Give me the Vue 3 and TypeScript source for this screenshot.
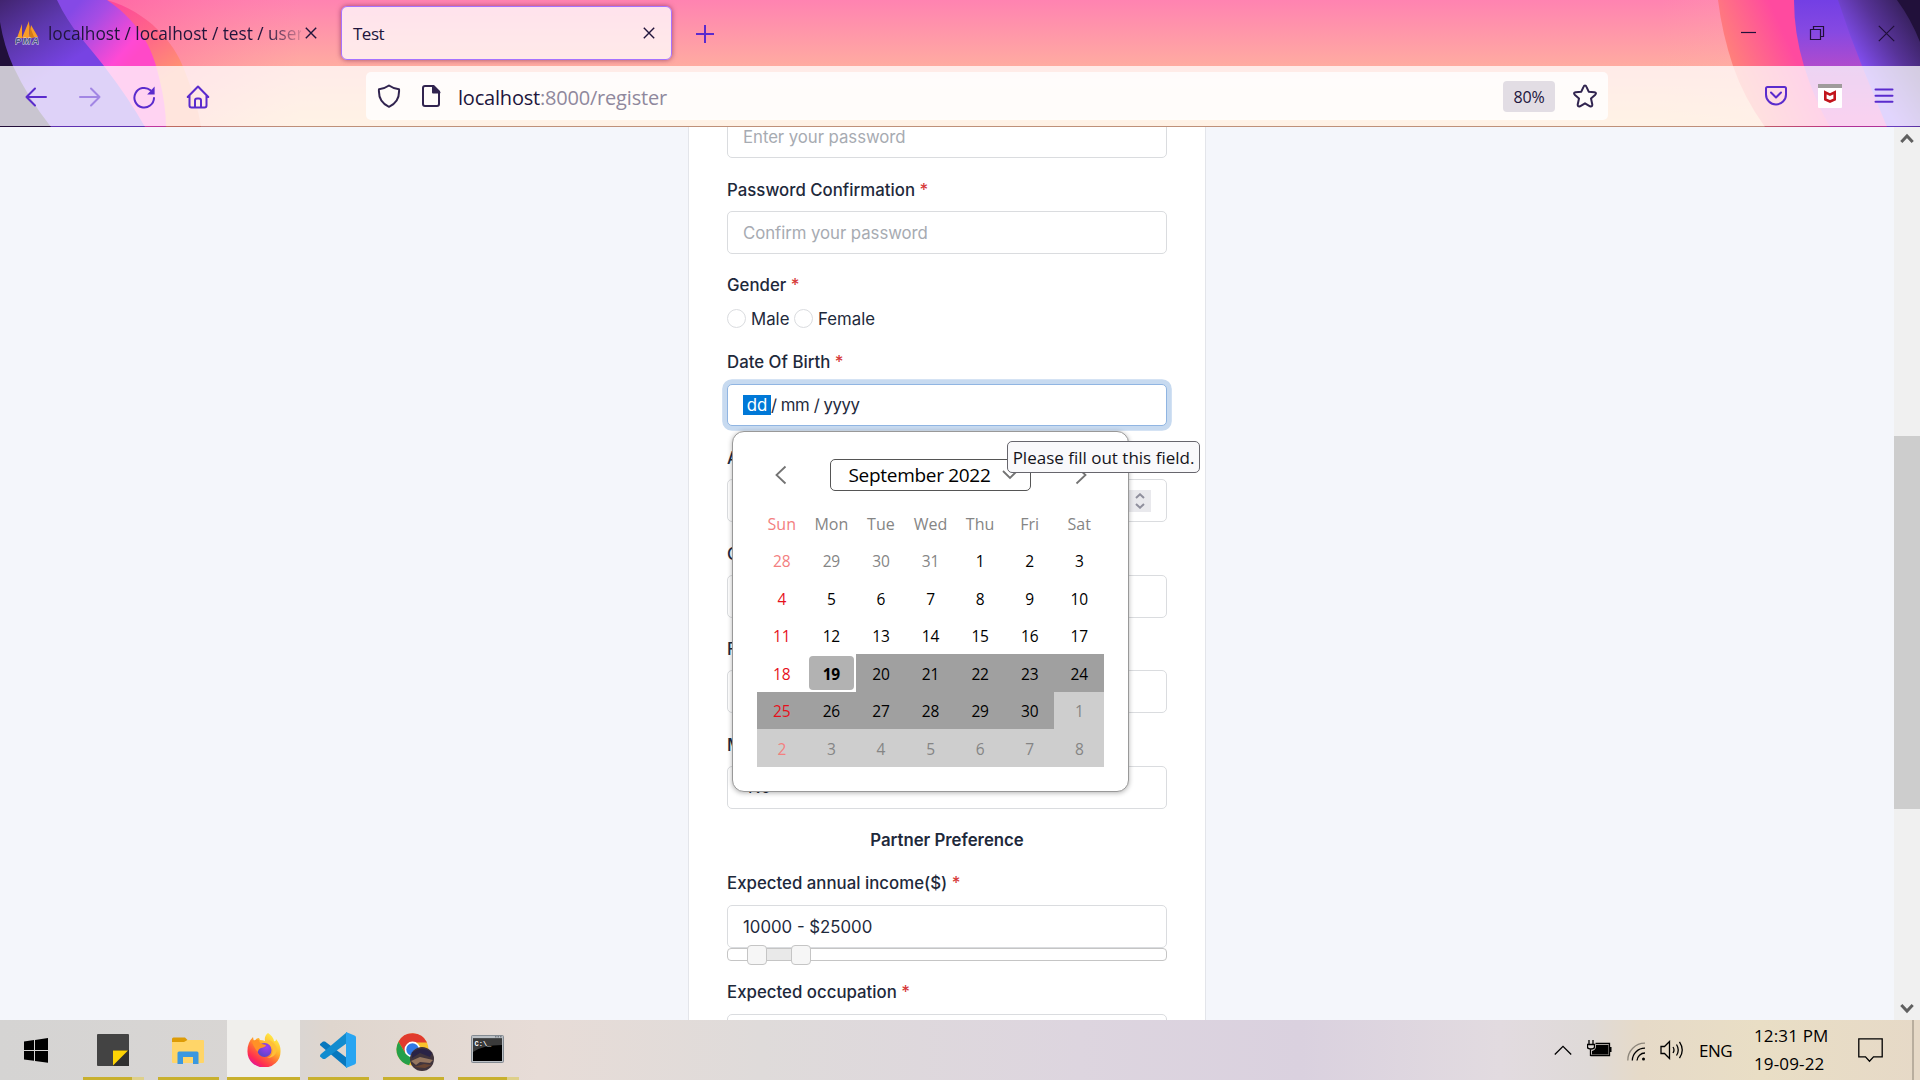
<script setup lang="ts">
interface Day { n: number; other: boolean; sunday: boolean; today: boolean; off: boolean }

const weekdays: string[] = ['Sun', 'Mon', 'Tue', 'Wed', 'Thu', 'Fri', 'Sat']

const days: Day[] = Array.from({ length: 42 }, (_, i) => {
  const offset = i - 3
  const other = offset < 1 || offset > 30
  const n = offset < 1 ? 31 + offset : offset > 30 ? offset - 30 : offset
  return { n, other, sunday: i % 7 === 0, today: offset === 19, off: offset > 19 }
})
</script>

<template>
  <div class="screen">
    <header class="chrome">
      <svg class="theme" viewBox="0 0 1920 127" width="1920" height="127" aria-hidden="true">
        <defs>
          <linearGradient id="base" x1="0" y1="0" x2="0" y2="1"><stop offset="0" stop-color="#ff83b1" /><stop offset=".52" stop-color="#ffaba1" /><stop offset="1" stop-color="#ffcb94" /></linearGradient>
          <linearGradient id="glowL" x1="0" y1="0" x2="1" y2="0"><stop offset="0" stop-color="#ff4f98" stop-opacity=".9" /><stop offset="1" stop-color="#ff6fa5" stop-opacity="0" /></linearGradient>
          <linearGradient id="glowR" x1="0" y1="0" x2="1" y2="0"><stop offset="0" stop-color="#ffb0a8" stop-opacity="0" /><stop offset="1" stop-color="#ffb2b4" stop-opacity=".8" /></linearGradient>
          <linearGradient id="coral" gradientUnits="userSpaceOnUse" x1="125" y1="0" x2="175" y2="75"><stop offset="0" stop-color="#fd4a98" /><stop offset=".55" stop-color="#ff6c86" /><stop offset="1" stop-color="#ff9471" /></linearGradient>
          <linearGradient id="magenta" gradientUnits="userSpaceOnUse" x1="72" y1="10" x2="130" y2="62"><stop offset="0" stop-color="#8549e6" /><stop offset=".3" stop-color="#a64ce4" /><stop offset=".85" stop-color="#ff49d4" /><stop offset="1" stop-color="#ff49c8" /></linearGradient>
          <linearGradient id="violet" gradientUnits="userSpaceOnUse" x1="0" y1="0" x2="50" y2="75"><stop offset="0" stop-color="#41246f" /><stop offset=".5" stop-color="#5d38ae" /><stop offset="1" stop-color="#7743e3" /></linearGradient>
          <linearGradient id="hot" gradientUnits="userSpaceOnUse" x1="1724" y1="50" x2="1790" y2="20"><stop offset="0" stop-color="#ff8279" /><stop offset=".85" stop-color="#ff4a9f" /></linearGradient>
          <linearGradient id="purple" x1="0" y1="0" x2="0" y2="1"><stop offset="0" stop-color="#733fe4" /><stop offset=".25" stop-color="#8649e2" /><stop offset=".55" stop-color="#b44bcb" /><stop offset="1" stop-color="#ea43c0" /></linearGradient>
          <linearGradient id="deep" gradientUnits="userSpaceOnUse" x1="1850" y1="52" x2="1908" y2="14"><stop offset="0" stop-color="#844ff4" /><stop offset=".55" stop-color="#573398" /><stop offset="1" stop-color="#38215f" /></linearGradient>
        </defs>
        <rect width="1920" height="127" fill="url(#base)" />
        <path d="M107 0H300V127H150Z" fill="url(#glowL)" opacity=".55" />
        <path d="M1660 0H1800V127H1660Z" fill="url(#glowR)" opacity=".45" />
        <path d="M0 0H107C148 12 174 42 184 69Q198 105 201 127H0Z" fill="url(#coral)" />
        <path d="M0 0H107C144 25 154 55 159 77Q166 105 166 127H0Z" fill="url(#magenta)" />
        <path d="M0 0H57C70 28 87 44 104 66Q130 100 145 127H0Z" fill="url(#violet)" />
        <path d="M0 22Q4 46 13 66Q28 98 51 127H0Z" fill="#21103a" />
        <path d="M1718 0Q1722 33 1733 66Q1744 98 1765 127H1920V0Z" fill="url(#hot)" />
        <path d="M1794 0Q1794 33 1804 66Q1814 99 1830 127H1920V0Z" fill="url(#purple)" />
        <path d="M1838 0Q1849 34 1862 66L1887 127H1920V0Z" fill="url(#deep)" />
        <path d="M1897 0Q1911 19 1920 42V0Z" fill="#21103a" />
      </svg>

      <div class="tabs">
        <div class="tab idle">
          <svg width="24" height="24" viewBox="0 0 24 24">
            <path d="M2 17 7 3 7 17ZM7 17 14 0 14.5 17ZM14.5 17 16 4 23 16Z" fill="#f89c28" />
            <path d="M14 3 15 17 19 16Z" fill="#d47a17" />
            <text x="0" y="23.4" font-family="Liberation Sans" font-size="9.4" font-weight="700" font-style="italic" fill="#4a5482" stroke="#d8daea" stroke-width=".9" paint-order="stroke" textLength="24">PMA</text>
          </svg>
          <span class="tab-title">localhost / localhost / test / users</span>
          <svg class="x" width="12" height="12" viewBox="0 0 12 12"><path d="M.8.8 11.2 11.2M11.2.8.8 11.2" /></svg>
        </div>
        <div class="tab current">
          <span>Test</span>
          <svg class="x" width="12" height="12" viewBox="0 0 12 12"><path d="M.8.8 11.2 11.2M11.2.8.8 11.2" /></svg>
        </div>
        <svg class="plus" width="18" height="18" viewBox="0 0 18 18"><path d="M9 0V18M0 9H18" /></svg>
        <div class="window-buttons">
          <svg width="16" height="16" viewBox="0 0 16 16"><path d="M1 7.5H16" /></svg>
          <svg width="16" height="16" viewBox="0 0 16 16"><path d="M1.5 4.5H11.5V14.5H1.5ZM4.500 4V1.500H14.500V11.500H12" /></svg>
          <svg width="17" height="17" viewBox="0 0 17 17"><path d="M.8.8 16.200 16.200M16.200.8.8 16.200" /></svg>
        </div>
      </div>

      <div class="toolbar">
        <nav class="nav-icons">
          <svg width="24" height="24" viewBox="0 0 24 24"><path d="M22 12H2.500M11 3.500 2.500 12 11 20.500" /></svg>
          <svg class="faded" width="24" height="24" viewBox="0 0 24 24"><path d="M2 12H21.500M13 3.500 21.500 12 13 20.500" /></svg>
          <svg width="24" height="24" viewBox="0 0 24 24"><path d="M22 13A9.800 9.800 0 1 1 18.500 5.200" /><path d="M22.600 1.600V9.400H15.200Z" fill="#5a2bcd" stroke="none" /></svg>
          <svg width="24" height="24" viewBox="0 0 24 24"><path d="M1.700 12 12 1.500 22.300 12M3.500 10.500V20.500Q3.500 22.500 5.500 22.500H18.500Q20.500 22.500 20.500 20.500V10.500M9 22V15.500Q9 13.500 11 13.500H13Q15 13.500 15 15.500V22" /></svg>
        </nav>
        <div class="urlbar">
          <svg class="shield" width="24" height="24" viewBox="0 0 24 24"><path d="M12 1.500Q17 5 22 5.200Q23 18 12 22.800Q1 18 2 5.200Q7 5 12 1.500Z" /></svg>
          <svg class="page-icon" width="20" height="24" viewBox="0 0 20 24"><path d="M4 2H12.500L18 7.500V20Q18 22 16 22H4Q2 22 2 20V4Q2 2 4 2Z" /><path d="M12 2V8.500H18.500Z" fill="#31244f" /></svg>
          <span class="url"><b>localhost</b>:8000/register</span>
          <span class="zoom">80%</span>
          <svg class="star" width="26" height="26" viewBox="0 0 26 26"><path d="M13 2.500Q14 2.500 14.500 3.800L16.700 8.700 22.400 9.300Q25 9.800 23.300 11.700L19 15.500 20.300 21.500Q20.400 24 18 23.300L13 20.300 8 23.300Q5.600 24 5.700 21.500L7 15.500 2.700 11.700Q1 9.800 3.600 9.300L9.300 8.700 11.500 3.800Q12 2.500 13 2.500Z" /></svg>
        </div>
        <div class="extensions">
          <svg width="24" height="22" viewBox="0 0 24 22"><path d="M3.500 2H20.500Q22 2 22 3.500V9.500A10 10 0 0 1 2 9.500V3.500Q2 2 3.500 2ZM7 7.500 12 12.500 17 7.500" /></svg>
          <svg width="24" height="24" viewBox="0 0 24 24"><rect width="24" height="24" rx="1" fill="#fff" stroke="none" /><rect width="24" height="4" fill="#9f9b9b" stroke="none" /><path class="shield-mark" d="M7.300 8.300 12 10.600 16.700 8.300V15.500L12 17.500 7.300 15.500Z" /></svg>
          <svg class="menu" width="20" height="18" viewBox="0 0 20 18"><path d="M1.500 2.500H18.500M1.500 8.700H18.500M1.500 14.800H18.500" /></svg>
        </div>
      </div>
    </header>

    <main class="page">
      <section class="card">
        <div class="input first placeholder">Enter your password</div>
        <div class="field conf">
          <label>Password Confirmation <i>*</i></label>
          <div class="input placeholder">Confirm your password</div>
        </div>
        <div class="field gender">
          <label>Gender <i>*</i></label>
          <div class="radios"><span class="radio"></span><span class="male">Male</span><span class="radio"></span><span class="female">Female</span></div>
        </div>
        <div class="field birth">
          <label>Date Of Birth <i>*</i></label>
          <div class="input focus"><span class="sel">dd</span><span class="date-rest">/ mm / yyyy</span></div>
          <div class="picker">
            <div class="picker-head">
              <svg width="12" height="20" viewBox="0 0 12 20"><path d="M10.500 1.500 1.500 10 10.500 18.500" /></svg>
              <div class="month"><span>September 2022</span><svg width="16" height="10" viewBox="0 0 16 10"><path d="M1 1 8 8 15 1" /></svg></div>
              <svg width="12" height="20" viewBox="0 0 12 20"><path d="M1.500 1.500 10.500 10 1.500 18.500" /></svg>
            </div>
            <div class="grid">
              <span v-for="(w, i) in weekdays" :key="w" class="cell weekday other" :class="{ sunday: i === 0 }">{{ w }}</span>
              <span v-for="(d, i) in days" :key="i" class="cell" :class="{ other: d.other, sunday: d.sunday, today: d.today, off: d.off }">{{ d.n }}</span>
            </div>
          </div>
          <div class="tooltip">Please fill out this field.</div>
        </div>
        <div class="field">
          <label>Annual income <i>*</i></label>
          <div class="input"><span class="spinner"><svg width="10" height="16" viewBox="0 0 10 16"><path d="M1 5 5 1.300 9 5M1 11 5 14.700 9 11" /></svg></span></div>
        </div>
        <div class="field"><label>Occupation <i>*</i></label><div class="input"></div></div>
        <div class="field"><label>Family Type <i>*</i></label><div class="input"></div></div>
        <div class="field"><label>Manglik <i>*</i></label><div class="input select">No</div></div>
        <h3>Partner Preference</h3>
        <div class="field income">
          <label>Expected annual income($) <i>*</i></label>
          <div class="input">10000 - $25000</div>
          <div class="slider"><span class="handle"></span><span class="range"></span><span class="handle"></span></div>
        </div>
        <div class="field last">
          <label>Expected occupation <i>*</i></label>
          <div class="input"></div>
        </div>
      </section>
      <aside class="scrollbar">
        <svg width="14" height="11" viewBox="0 0 14 11"><path d="M1.300 9 7 3 12.700 9" /></svg>
        <div class="thumb"></div>
        <svg width="14" height="11" viewBox="0 0 14 11"><path d="M1.300 2 7 8 12.700 2" /></svg>
      </aside>
    </main>

    <footer class="taskbar">
      <div class="app start"><svg width="24" height="25" viewBox="0 0 24 25"><path d="M0 3.500 10 2.100V12H0ZM11 2 24 0V12H11ZM0 13H10V22.800L0 21.500ZM11 13H24V24.800L11 23Z" fill="#000" /></svg></div>
      <div class="app notes">
        <svg width="32" height="32" viewBox="0 0 32 32"><rect width="32" height="32" rx="1" fill="#434343" /><path d="M16 32V16H32V32Z" fill="#303030" /><path d="M16 16.500H31L16 31.500Z" fill="#fdd405" /></svg>
      </div>
      <div class="app explorer">
        <svg width="32" height="28" viewBox="0 0 32 28"><path d="M0 2Q0 .5 1.500.5H13L15.500 3 13 6H0Z" fill="#dd9c06" /><path d="M0 5H12L15.500 3H31Q32 3 32 4V25Q32 26 31 26H1Q0 26 0 25Z" fill="#ffd568" /><path d="M5.500 27V16Q5.500 14.500 7 14.500H25Q26.500 14.500 26.500 16V27H21V20H11V27Z" fill="#3b98df" /></svg>
      </div>
      <div class="app firefox">
        <svg width="34" height="35" viewBox="0 0 34 35">
          <defs>
            <linearGradient id="ff" x1=".85" y1=".1" x2=".25" y2=".95"><stop offset="0" stop-color="#fff04a" /><stop offset=".35" stop-color="#ffb52c" /><stop offset=".6" stop-color="#ff6a35" /><stop offset=".85" stop-color="#ff2d52" /><stop offset="1" stop-color="#e6188f" /></linearGradient>
            <radialGradient id="globe" cx=".65" cy=".3" r=".8"><stop offset="0" stop-color="#a13df1" /><stop offset="1" stop-color="#5446c4" /></radialGradient>
          </defs>
          <path d="M21 1Q26 4 27 9Q29 10 29 7Q34 13 33.500 20A16.500 15.500 0 0 1 .5 20Q0 11 6 5Q6 8 8 9Q9 6 12 6L13 8Q16 8 18 9Q17 4 21 1Z" fill="url(#ff)" />
          <circle cx="17.500" cy="18" r="7" fill="url(#globe)" />
          <path d="M5 10Q8 7 12 8Q12 11 15 12L19 13Q19 15 14 16Q11 17 11 20Q7 16 5 10Z" fill="#ff9126" />
          <path d="M18 10Q25 10 26 17Q26 24 20 26Q28 26 30 18Q29 11 22 8Z" fill="#ffbf38" />
        </svg>
      </div>
      <div class="app vscode">
        <svg width="36" height="36" viewBox="0 0 36 36"><path d="M0 12 3 9.500 5 9.500 27 26V36L1 14Q-.5 13 0 12Z" fill="#0878be" /><path d="M27 0V11L5 27H3L0 24.500Q-.5 23.500 1 22Z" fill="#128ccf" /><path d="M26 0 34.500 3.500Q36 4 36 5.500V30.500Q36 32 34.500 32.500L26 36Z" fill="#28a5f2" /></svg>
      </div>
      <div class="app google">
        <svg width="38" height="38" viewBox="0 0 38 38">
          <circle cx="16.500" cy="16.500" r="16" fill="#f9c42c" />
          <path d="M2.500 8.700A16 16 0 0 1 31 9.500H16.500L9.500 20.500Z" fill="#e13b2e" />
          <path d="M2.500 8.700 9.500 20.500 16.500 24 13 32.200A16 16 0 0 1 2.500 8.700Z" fill="#25a04a" />
          <circle cx="16.500" cy="16.500" r="7.900" fill="#fff" /><circle cx="16.500" cy="16.500" r="6.200" fill="#3079e4" />
          <circle cx="26" cy="26" r="12" fill="#40343c" /><path d="M16 19.500Q26 12 36 20L34 24 24 20 16 25Z" fill="#292346" /><path d="M15 28 24 24 37 27 34 30 24 29 20 32Z" fill="#95765f" /><path d="M18 34 28 31 36 32 29 35Z" fill="#6a4633" />
        </svg>
      </div>
      <div class="app cmd">
        <svg width="33" height="28" viewBox="0 0 33 28"><rect x=".5" y=".5" width="32" height="27" rx="1" fill="#bbc0c5" stroke="#848b92" /><rect x="2" y="3.500" width="29" height="22.500" fill="#000" /><path d="M2 3.500H31V10Q12 10 2 17Z" fill="#3a3a3a" /><path d="M24 1.800H31" stroke="#59606a" stroke-dasharray="1.500 1" /><text x="3.500" y="10.500" font-family="Liberation Mono" font-size="7" font-weight="700" fill="#fff">C:\_</text></svg>
      </div>
      <div class="tray">
        <svg width="18" height="11" viewBox="0 0 18 11"><path d="M.8 9.500 9 1.300 17.200 9.500" /></svg>
        <svg class="battery" width="25" height="17" viewBox="0 0 25 17"><path d="M2 0V4M6 0V4M.5 4.500H7.500V7Q7.500 9 4 9Q.5 9 .5 7ZM3.500 9V16" /><path d="M8.500 3.500H22.500V15.500H3.500" /><path d="M9 5H21.500V14.500H5V11Q9 10 9 6ZM23 7H24.500V12H23Z" fill="#000" stroke="none" /></svg>
        <svg class="wifi" width="19" height="19" viewBox="0 0 19 19"><path d="M.8 18.500A17 17 0 0 1 18 1.200" stroke="#8d867b" /><path d="M5.300 18.500A12.500 12.500 0 0 1 18 6.200M10 18.500A8 8 0 0 1 18 11" /><circle cx="16.500" cy="17" r="1.500" fill="#000" stroke="none" /></svg>
        <svg class="sound" width="24" height="20" viewBox="0 0 24 20"><path d="M1 6.500H4.500L9.500 1.500V18.500L4.500 13.500H1Z" /><path d="M13 7Q15 10 13 13M16.500 4.500Q20 10 16.500 15.500M19.500 1.800Q25 10 19.500 18.200" /></svg>
        <span class="lang">ENG</span>
        <div class="clock"><span>12:31 PM</span><span>19-09-22</span></div>
        <svg class="action" width="25" height="25" viewBox="0 0 25 25"><path d="M.8.8H24.200V18.800H15.500L11.500 23.200 7.500 18.800H.8Z" /></svg>
        <span class="edge"></span>
      </div>
    </footer>
  </div>
</template>

<style>
body { margin: 0; overflow: hidden; }
</style>

<style scoped>
* { box-sizing: border-box; }
svg { display: block; flex: none; fill: none; }
.screen { width: 1920px; height: 1080px; display: flex; flex-direction: column; overflow: hidden; font-family: "Open Sans", "Noto Sans", sans-serif; }
.chrome { position: relative; flex: none; height: 127px; isolation: isolate; }
.chrome::after { content: ""; position: absolute; left: 0; right: 0; bottom: 0; height: 1px; background: rgba(40, 10, 60, .3); }
.theme { position: absolute; inset: 0; z-index: -1; }
.tabs { height: 66px; display: flex; align-items: center; color: #21153c; font-size: 17px; white-space: nowrap; }
.tab { display: flex; align-items: center; flex: none; }
.idle { width: 341px; padding-left: 15px; }
.tab-title { width: 253px; margin-left: 9px; overflow: hidden; font-size: 17.3px; letter-spacing: -.03px; mask-image: linear-gradient(90deg, #000 86%, rgba(0, 0, 0, .15) 100%); }
.x { stroke: #21153c; stroke-width: 1.4; margin-left: 4px; }
.current { width: 331px; height: 54px; padding: 0 16px 0 11px; justify-content: space-between; background: rgba(255, 255, 255, .76); border: 1px solid #a673ff; border-radius: 6px; box-shadow: 0 0 5px rgba(90, 10, 60, .55); letter-spacing: -.5px; }
.plus { margin: 2px 0 0 24px; stroke: #5a2bcd; stroke-width: 2; }
.window-buttons { display: flex; align-items: center; gap: 53px; margin-left: auto; padding-right: 25px; }
.window-buttons svg { stroke: #21103a; stroke-width: 1.2; }
.toolbar { height: 60px; display: flex; align-items: center; background: rgba(255, 255, 255, .76); }
.nav-icons { width: 366px; padding: 1px 0 0 24px; display: flex; gap: 30px; }
.nav-icons svg { stroke: #5a2bcd; stroke-width: 2; stroke-linecap: round; stroke-linejoin: round; }
.nav-icons .faded { opacity: .45; }
.urlbar { width: 1242px; height: 48px; padding: 0 10px 0 11px; display: flex; align-items: center; background: rgba(255, 255, 255, .8); border-radius: 5px; }
.urlbar svg { stroke: #31244f; stroke-width: 2; stroke-linejoin: round; }
.page-icon { margin-left: 20px; }
.url { margin-left: 17px; padding-top: 2px; font-size: 20px; letter-spacing: -.2px; color: #8f889d; }
.url b { font-weight: 400; color: #21153c; }
.zoom { width: 52px; height: 31px; margin-left: auto; line-height: 32px; text-align: center; background: #e2dde4; border-radius: 4px; font-size: 16px; letter-spacing: -.2px; color: #21153c; }
.star { margin-left: 17px; }
.extensions { display: flex; align-items: center; gap: 30px; margin-left: auto; padding-right: 26px; }
.extensions svg { stroke: #5a2bcd; stroke-width: 2; stroke-linejoin: round; stroke-linecap: round; }
.extensions .menu { margin-left: 2px; }
.extensions .shield-mark { stroke: #c2151c; stroke-width: 2.6; stroke-linejoin: miter; }

.page { height: 893px; flex: none; display: flex; overflow: hidden; background: #f4f6fb; }
.card { width: 518px; height: 920px; margin-left: 688px; padding: 0 38px; background: #fff; border: solid #e3e5ea; border-width: 0 1px; font: 16.8px/24px Inter, sans-serif; color: #1e293b; }
.field { position: relative; height: 76.5px; margin-bottom: 19px; }
label { display: block; height: 24px; margin-bottom: 10px; padding-top: 1px; font-weight: 500; white-space: nowrap; letter-spacing: .02px; }
label i { font-style: normal; color: #d63939; }
.gender label, .birth label, .income label, .last label { padding-top: 0; }
.input { height: 43px; padding: 0 15px; display: flex; align-items: center; background: #fff; border: 1px solid #dadcdf; border-radius: 5px; white-space: nowrap; }
.placeholder { color: #a7abb2; letter-spacing: -.06px; }
.first { margin: -12px 0 19px; }
.conf { height: 77px; }
.gender { height: 57.800px; }
.gender label { margin-bottom: 9px; }
.radios { display: flex; align-items: center; height: 24px; }
.radio { width: 19px; height: 19px; margin-right: 5px; border: 1px solid #dadcdf; border-radius: 50%; }
.male { width: 43px; padding-top: 2px; }
.female { padding-top: 2px; }
.focus { height: 42px; border-color: #90b5e2; box-shadow: 0 0 0 4.800px #c7daf0; }
.sel { width: 28px; height: 20px; line-height: 20px; text-align: center; background: #0078d7; color: #fff; }
.date-rest { letter-spacing: -.45px; }
.spinner { display: flex; align-items: center; justify-content: center; width: 22px; height: 22px; margin-left: auto; background: #e9e9ed; }
.spinner svg { stroke: #8f8f9d; stroke-width: 2; }
.select { padding-left: 20px; }
h3 { margin: 0 0 19px; padding-top: 1px; font-size: 16.8px; line-height: 24px; font-weight: 600; text-align: center; }
.income { height: 90px; }
.slider { height: 13px; display: flex; align-items: center; padding-left: 19px; border: 1px solid #c5c5c5; border-radius: 4px; }
.handle { flex: none; width: 20px; height: 20px; background: #f6f6f6; border: 1px solid #c5c5c5; border-radius: 4px; }
.range { width: 24px; height: 11px; background: #e9e9e9; }

.picker { position: absolute; z-index: 2; left: 5px; top: 81.300px; width: 397px; height: 361px; padding: 27px 24px 0; background: #fff; border: 1px solid #999; border-radius: 12px; box-shadow: 0 1px 5px rgba(0, 0, 0, .3); font-family: "Open Sans", "Noto Sans", sans-serif; font-size: 15.500px; color: #000; }
.picker-head { display: flex; align-items: center; justify-content: space-between; height: 32px; padding: 0 17px 0 18px; }
.picker-head svg { stroke: #737373; stroke-width: 1.800; }
.month { width: 201px; height: 32px; margin: 0 1px 0 -1px; padding: 0 12px 0 18px; display: flex; align-items: center; justify-content: space-between; border: 1px solid #555; border-radius: 5px; font-size: 19px; font-weight: 500; letter-spacing: -.300px; white-space: nowrap; }
.grid { width: 347px; margin-top: 13.2px; display: grid; grid-template-columns: repeat(7, 1fr); grid-auto-rows: 37.500px; }
.cell { display: flex; align-items: center; justify-content: center; padding-top: 1px; letter-spacing: -.200px; }
.weekday { font-size: 16px; letter-spacing: 0; }
.other { color: #858585; }
.sunday { color: #e6101c; }
.sunday.other { color: #f3807f; }
.off { background: #a0a0a0; }
.off.other { background: #cecece; }
.today { margin: 2px; background: #b2b2b2; border-radius: 4px; font-weight: 700; }
.tooltip { position: absolute; z-index: 3; left: 280px; top: 91.300px; width: 193px; height: 32px; line-height: 31px; text-align: center; background: #f9f9fb; border: 1px solid #67666d; border-radius: 5px; font-family: "Open Sans", "Noto Sans", sans-serif; font-size: 17px; color: #15141a; white-space: nowrap; }

.scrollbar { width: 26px; margin-left: auto; padding: 6px 0; display: flex; flex-direction: column; align-items: center; background: #f0f0f0; }
.scrollbar svg { stroke: #606060; stroke-width: 3; }
.thumb { width: 26px; height: 373px; margin: 292px 0 auto; background: #cdcdcd; }

.taskbar { position: relative; height: 60px; flex: none; display: flex; background: linear-gradient(90deg, #d5d4d3 0, #d9d6d4 290px, #dfd6ce 330px, #e7dcd7 540px, #dfdbda 760px, #ddd5df 1080px, #dad1df 1300px, #e2dbe0 1500px, #dfdad8 1590px, #e6dac8 1640px, #e9dec5 1760px, #e6d9c7 1920px); }
.app { position: relative; flex: none; width: 61px; height: 60px; display: flex; align-items: center; justify-content: center; border-bottom: 3px solid #c8b02e; }
.start { width: 72px; border: 0; }
.notes { margin-left: 11px; padding-right: 1px; }
.notes::after, .cmd::after { content: ""; position: absolute; right: 0; bottom: -3px; width: 12px; height: 3px; background: #ded08a; }
.notes svg { margin-top: 3px; }
.explorer { margin-left: 14px; padding-right: 1px; }
.explorer svg { margin-top: 4px; }
.firefox { width: 73px; margin-left: 8px; background: #f0efec; }
.firefox svg { margin-top: 1px; }
.vscode { margin-left: 8px; padding-right: 1px; }
.vscode svg { margin-top: 2px; }
.google { margin-left: 14px; }
.google svg { margin: 7px 0 0 3px; }
.cmd { margin-left: 14px; padding-right: 2px; }
.tray { margin-left: auto; display: flex; align-items: center; color: #000; font-size: 17px; }
.tray svg { stroke: #000; stroke-width: 1.300; }
.tray .battery { margin: -3px 0 0 15px; }
.wifi { margin: 2px 0 0 15px; }
.sound { margin-left: 14px; }
.lang { width: 34px; margin-left: 15px; letter-spacing: -.5px; }
.clock { width: 75px; margin-left: 21px; display: flex; flex-direction: column; line-height: 28px; white-space: nowrap; letter-spacing: .15px; }
.action { margin-left: 29px; }
.edge { width: 2px; height: 60px; margin: 0 6px 0 29px; background: #b9ae9e; }
</style>
